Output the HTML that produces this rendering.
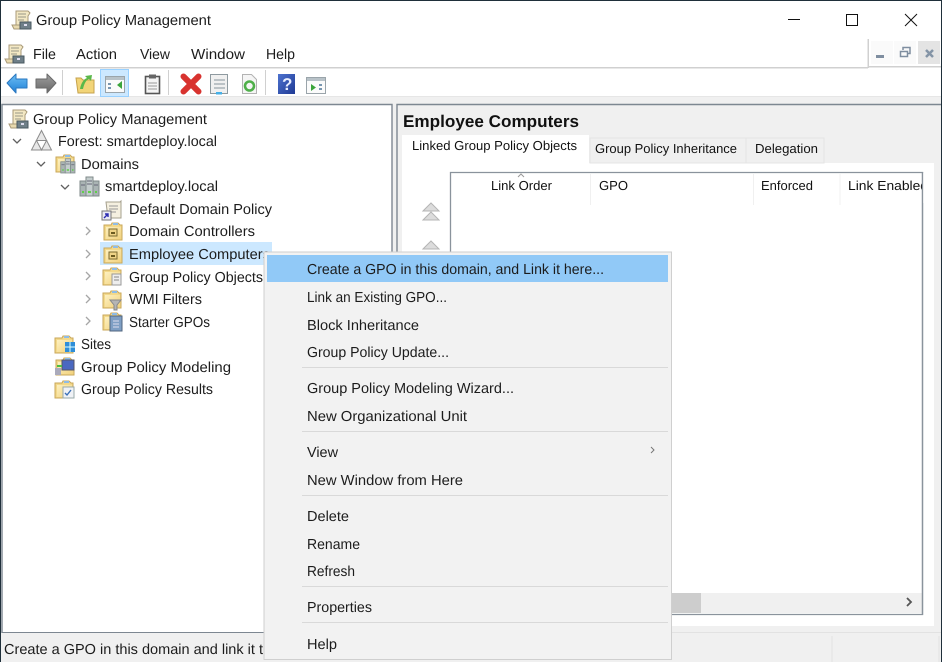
<!DOCTYPE html>
<html><head><meta charset="utf-8"><title>Group Policy Management</title>
<style>
html,body{margin:0;padding:0;background:#fff;width:942px;height:662px;overflow:hidden}
svg{display:block}
text{font-family:"Liberation Sans",sans-serif;font-size:14.5px;fill:#1c1c1c;text-rendering:geometricPrecision}
.r{font-size:13px;fill:#111}
</style></head><body>
<svg width="942" height="662" viewBox="0 0 942 662" xmlns="http://www.w3.org/2000/svg">
<defs>
<linearGradient id="fg" x1="0" y1="0" x2="1" y2="1"><stop offset="0" stop-color="#fdf0c0"/><stop offset="1" stop-color="#f2d27e"/></linearGradient>
<linearGradient id="bl" x1="0" y1="0" x2="0" y2="1"><stop offset="0" stop-color="#6fc0f5"/><stop offset="1" stop-color="#1f7fd6"/></linearGradient>
<linearGradient id="gy" x1="0" y1="0" x2="0" y2="1"><stop offset="0" stop-color="#a0a0a0"/><stop offset="1" stop-color="#666"/></linearGradient>
<linearGradient id="hb" x1="0" y1="0" x2="1" y2="1"><stop offset="0" stop-color="#4d72cf"/><stop offset="1" stop-color="#1f3a94"/></linearGradient>
<g id="scroll">
  <path d="M5 1h12l2 2-2 3v9H5z" fill="#f3e8c4" stroke="#a99a78"/>
  <path d="M7 4h8M7 7h8M7 10h6" stroke="#998" stroke-width="1"/>
  <path d="M1 15h11v4H3z" fill="#e8d9ae" stroke="#a99a78"/>
  <rect x="9" y="12" width="11" height="7" fill="#6f7f88" stroke="#4a5860"/>
  <rect x="13" y="14" width="3" height="2" fill="#dde"/>
</g>
<g id="folder">
  <path d="M1 3h7l1-2h6l2 2h2v15H1z" fill="#f3d98b" stroke="#c9a75a"/>
  <path d="M3 5h15v12H3z" fill="url(#fg)"/>
  <rect x="10" y="1" width="5" height="2" fill="#8fbce6"/>
</g>
<g id="ou">
  <use href="#folder"/>
  <rect x="6" y="7" width="8" height="7" fill="#efd386" stroke="#7a6a30"/>
  <rect x="8" y="10" width="4" height="2" fill="#6b5a20"/>
</g>
<g id="servers">
  <rect x="1" y="5" width="6" height="15" fill="#aab4b4" stroke="#7f8a8a"/>
  <rect x="7" y="1" width="7" height="19" fill="#c4cdcd" stroke="#7f8a8a"/>
  <rect x="14" y="5" width="6" height="15" fill="#aab4b4" stroke="#7f8a8a"/>
  <path d="M2 9h4M8 5h5M8 8h5M15 9h4" stroke="#667"/>
  <path d="M3 16h2M9 16h3M16 16h2" stroke="#5fd04a" stroke-width="2"/>
</g>
<g id="chev"><path d="M0 0l4 4 4-4" fill="none" stroke="#606060" stroke-width="1.300"/></g>
<g id="cr"><path d="M0 0l4 4-4 4" fill="none" stroke="#a6a6a6" stroke-width="1.300"/></g>
<g id="tri"><path d="M0 8L8 0l8 8z" fill="#dcdcdc" stroke="#b5b5b5"/></g>
</defs>

<!-- window -->
<rect width="942" height="662" fill="#fff"/>
<rect x="0" y="97" width="942" height="565" fill="#f0f0f0"/>
<rect x="0" y="67" width="868" height="1.500" fill="#d0d0d0"/>
<rect x="869" y="66" width="73" height="1.500" fill="#d0d0d0"/>
<rect x="867.500" y="39" width="1.500" height="29" fill="#d0d0d0"/>
<rect x="0" y="96" width="942" height="1" fill="#e6e6e6"/>

<!-- title -->
<use href="#scroll" x="11" y="10"/>
<text x="36" y="25" textLength="175" lengthAdjust="spacingAndGlyphs">Group Policy Management</text>
<path d="M788 19.500h12" stroke="#111" stroke-width="1"/>
<rect x="846.500" y="14.500" width="11" height="11" fill="none" stroke="#111"/>
<path d="M905 14l12 12M917 14l-12 12" stroke="#111" stroke-width="1"/>

<!-- menu -->
<use href="#scroll" x="4" y="44"/>
<text x="33" y="59" textLength="23" lengthAdjust="spacingAndGlyphs">File</text>
<text x="76" y="59" textLength="41" lengthAdjust="spacingAndGlyphs">Action</text>
<text x="140" y="59" textLength="30" lengthAdjust="spacingAndGlyphs">View</text>
<text x="191" y="59" textLength="54" lengthAdjust="spacingAndGlyphs">Window</text>
<text x="266" y="59" textLength="29" lengthAdjust="spacingAndGlyphs">Help</text>
<rect x="871" y="41" width="22" height="23" fill="#fafafa"/>
<rect x="894" y="41" width="22" height="23" fill="#fafafa"/>
<rect x="918" y="41" width="22" height="23" fill="#e4e4e4"/>
<rect x="876" y="55" width="8" height="3" fill="#7f8ea0"/>
<path d="M900.500 51.500h7v5h-7z" fill="none" stroke="#7f8ea0" stroke-width="1.500"/>
<path d="M903 50v-2.500h7v6h-2" fill="none" stroke="#7f8ea0" stroke-width="1.500"/>
<path d="M926 50l7 7M933 50l-7 7" stroke="#8494a6" stroke-width="2.500"/>

<!-- toolbar -->
<path d="M7 83l9-9v5h11v9H16v5z" fill="url(#bl)" stroke="#2a78c0" stroke-linejoin="round"/>
<path d="M56 83l-9-9v5H36v9h11v5z" fill="url(#gy)" stroke="#6a6a6a" stroke-linejoin="round"/>
<rect x="62" y="70" width="1" height="25" fill="#d0d0d0"/>
<path d="M76 78h5l2 2h11v13H78z" fill="#f2d477" stroke="#c6a24c"/>
<path d="M80 89c1-6 4-10 7-11l-2-2 7-1-1 6-2-2c-3 1-5 5-6 10z" fill="#5bb84a"/>
<rect x="100.500" y="69.500" width="28" height="27" fill="#cce8ff" stroke="#99d1ff"/>
<rect x="105.500" y="76.500" width="19" height="16" fill="#fbfbfb" stroke="#9aa4aa"/>
<rect x="106" y="77" width="18" height="3" fill="#b8c2c8"/>
<path d="M108 83h3v2h-3zM108 87h3v2h-3z" fill="#7896b0"/>
<path d="M122 81v8l-5-4z" fill="#3ba53b"/>
<rect x="145.500" y="76.500" width="14" height="17" fill="#f4f4f4" stroke="#555" stroke-width="1.600"/>
<rect x="149" y="74.500" width="7" height="4" fill="#666"/>
<path d="M148 83h9M148 86h9M148 89h9" stroke="#999"/>
<rect x="168" y="70" width="1" height="25" fill="#d0d0d0"/>
<path d="M183.500 76.500l15 15M198.500 76.500l-15 15" stroke="#d8332f" stroke-width="6" stroke-linecap="round"/>
<rect x="210.500" y="74.500" width="17" height="19" fill="#f0f0f0" stroke="#8e9aa0"/>
<path d="M214 80h11M214 84h11M214 88h11" stroke="#a9b3b8" stroke-width="1.500"/>
<rect x="216" y="92" width="6" height="2.500" fill="#45b0e8"/>
<path d="M242.500 74.500h9l5 5v14h-14z" fill="#f5f5f5" stroke="#b3b3b3"/>
<circle cx="249.500" cy="86" r="4.500" fill="none" stroke="#4fb04a" stroke-width="2.600"/>
<rect x="265" y="70" width="1" height="25" fill="#d0d0d0"/>
<rect x="278" y="74" width="17" height="20" fill="url(#hb)"/>
<text x="282" y="90" style="font-size:17px;font-weight:bold;fill:#e8eeff">?</text>
<rect x="306.500" y="77.500" width="19" height="16" fill="#fbfbfb" stroke="#9aa4aa"/>
<rect x="307" y="78" width="18" height="3" fill="#b8c2c8"/>
<path d="M311 84v7l5-3.500z" fill="#3ba53b"/>
<path d="M319 84h3v2h-3zM319 88h3v2h-3z" fill="#7896b0"/>

<!-- tree pane -->
<rect x="2" y="104" width="390" height="529" fill="#fff"/>
<path d="M2 633V104.500h390V633" fill="none" stroke="#7d8791" stroke-width="1.400"/>
<rect x="2" y="632" width="390" height="1.500" fill="#7d8791"/>
<rect x="100" y="242" width="172" height="23" fill="#cce8ff"/>

<use href="#scroll" x="8" y="109"/>
<text x="33" y="124" textLength="174" lengthAdjust="spacingAndGlyphs">Group Policy Management</text>
<use href="#chev" x="13" y="139"/>
<path d="M41.500 130.500L31.500 150h20z" fill="#e8e8e8" stroke="#8c8c8c"/><path d="M36.500 140.500h10L41.500 150z" fill="#fff" stroke="#8c8c8c"/>
<text x="58" y="146" textLength="159" lengthAdjust="spacingAndGlyphs">Forest: smartdeploy.local</text>
<use href="#chev" x="37" y="162"/>
<use href="#folder" x="55" y="154"/><use href="#servers" transform="translate(60 158) scale(.75)"/>
<text x="81" y="169" textLength="58" lengthAdjust="spacingAndGlyphs">Domains</text>
<use href="#chev" x="61" y="185"/>
<use href="#servers" x="79" y="176"/>
<text x="105" y="191" textLength="113" lengthAdjust="spacingAndGlyphs">smartdeploy.local</text>
<path d="M106 202h14l1-1v17h-13z" fill="#f5f0e0" stroke="#a5a08e"/><path d="M109 206h9M109 209h9M109 212h7" stroke="#999"/><rect x="102" y="211" width="9" height="9" fill="#e9e9f4" stroke="#777"/><path d="M104 218l4-4M105 214h3v3" stroke="#2a2ab0" stroke-width="1.400" fill="none"/>
<text x="129" y="214" textLength="143" lengthAdjust="spacingAndGlyphs">Default Domain Policy</text>
<use href="#cr" x="86" y="227"/>
<use href="#ou" x="103" y="222"/>
<text x="129" y="236" textLength="126" lengthAdjust="spacingAndGlyphs">Domain Controllers</text>
<use href="#cr" x="86" y="250"/>
<use href="#ou" x="103" y="245"/>
<text x="129" y="259" textLength="141" lengthAdjust="spacingAndGlyphs">Employee Computers</text>
<use href="#cr" x="86" y="272"/>
<use href="#folder" x="102" y="267"/><rect x="112" y="274" width="9" height="11" fill="#eee" stroke="#999"/><path d="M114 277h5M114 280h5" stroke="#888"/>
<text x="129" y="282" textLength="134" lengthAdjust="spacingAndGlyphs">Group Policy Objects</text>
<use href="#cr" x="86" y="295"/>
<use href="#folder" x="102" y="290"/><path d="M110 300h11l-4 5v5l-3 0v-5z" fill="#b5b5b5" stroke="#888"/>
<text x="129" y="304" textLength="73" lengthAdjust="spacingAndGlyphs">WMI Filters</text>
<use href="#cr" x="86" y="317"/>
<use href="#folder" x="102" y="312"/><rect x="110" y="316" width="12" height="15" fill="#7f9fc4" stroke="#50667f"/><path d="M113 321h6M113 324h6M113 327h6" stroke="#dde"/>
<text x="129" y="327" textLength="81" lengthAdjust="spacingAndGlyphs">Starter GPOs</text>
<use href="#folder" x="54" y="335"/><rect x="65" y="342" width="10" height="10" fill="#2f8ed8"/><path d="M65 347h10M70 342v10" stroke="#dff"/>
<text x="81" y="349" textLength="30" lengthAdjust="spacingAndGlyphs">Sites</text>
<use href="#folder" x="55" y="357"/><rect x="62" y="360" width="12" height="10" fill="#4a68c0" stroke="#556"/><rect x="55" y="368" width="6" height="7" fill="#aab"/><path d="M57 366h5" stroke="#4bbd3f" stroke-width="2"/>
<text x="81" y="372" textLength="150" lengthAdjust="spacingAndGlyphs">Group Policy Modeling</text>
<use href="#folder" x="54" y="380"/><rect x="63" y="387" width="11" height="11" fill="#f0f2f6" stroke="#9aa"/><path d="M65 393l2 2 4-5" stroke="#3a70b8" fill="none" stroke-width="1.400"/>
<text x="81" y="394" textLength="132" lengthAdjust="spacingAndGlyphs">Group Policy Results</text>

<!-- right pane -->
<rect x="397" y="104" width="544" height="528" fill="#f0f0f0"/>
<path d="M397 632V104.500h545" fill="none" stroke="#7d8791" stroke-width="1.400"/>
<text x="403" y="127" textLength="176" lengthAdjust="spacingAndGlyphs" style="font-size:17px;font-weight:bold;fill:#111">Employee Computers</text>
<rect x="402" y="163" width="532" height="463" fill="#fff"/>
<rect x="402" y="135" width="187" height="29" fill="#fff"/>
<rect x="590" y="138" width="156" height="25" fill="#f0f0f0" stroke="#e4e4e4"/>
<rect x="746" y="138" width="78" height="25" fill="#f0f0f0" stroke="#e4e4e4"/>
<text class="r" x="412" y="150" textLength="165" lengthAdjust="spacingAndGlyphs">Linked Group Policy Objects</text>
<text class="r" x="595" y="153" textLength="142" lengthAdjust="spacingAndGlyphs">Group Policy Inheritance</text>
<text class="r" x="755" y="153" textLength="63" lengthAdjust="spacingAndGlyphs">Delegation</text>

<use href="#tri" x="423" y="203"/><path d="M423 220l8-8 8 8z" fill="#dcdcdc" stroke="#b5b5b5"/>
<use href="#tri" x="423" y="241"/>

<rect x="450" y="172" width="473" height="443" fill="#fff"/>
<rect x="450" y="593" width="472" height="20" fill="#f0f0f0"/>
<rect x="640" y="593" width="61" height="20" fill="#cdcdcd"/>
<path d="M907 598l4 4-4 4" fill="none" stroke="#555" stroke-width="1.800"/>
<path d="M450.500 615V172.500h472V614.500H450" fill="none" stroke="#8a939c" stroke-width="1.300"/>
<path d="M590.500 174v31M753.500 174v31M840 174v31" stroke="#f0f0f0"/>
<path d="M518 177l3-3 3 3" fill="none" stroke="#999"/>
<text class="r" x="491" y="190" textLength="61" lengthAdjust="spacingAndGlyphs">Link Order</text>
<text class="r" x="599" y="190" textLength="29" lengthAdjust="spacingAndGlyphs">GPO</text>
<text class="r" x="761" y="190" textLength="52" lengthAdjust="spacingAndGlyphs">Enforced</text>
<text class="r" x="848" y="190" textLength="80" lengthAdjust="spacingAndGlyphs">Link Enabled</text>
<rect x="922" y="173" width="12" height="30" fill="#fff"/>
<path d="M922.500 172v443" stroke="#8a939c" stroke-width="1.300"/>

<!-- status -->
<rect x="0" y="633" width="942" height="29" fill="#f0f0f0"/>
<rect x="392" y="632" width="550" height="1" fill="#e2e2e2"/>
<rect x="831.500" y="636" width="1" height="26" fill="#e2e2e2"/>
<rect x="938.500" y="636" width="1" height="26" fill="#e2e2e2"/>
<text x="4" y="654" textLength="259" lengthAdjust="spacingAndGlyphs">Create a GPO in this domain and link it t</text>

<!-- context menu -->
<rect x="264" y="252" width="407.500" height="407.500" fill="#f2f2f2" stroke="#cfcfcf"/>
<rect x="267" y="255" width="401" height="27" fill="#91c9f7"/>
<text x="307" y="274" textLength="297" lengthAdjust="spacingAndGlyphs">Create a GPO in this domain, and Link it here...</text>
<text x="307" y="302" textLength="140" lengthAdjust="spacingAndGlyphs">Link an Existing GPO...</text>
<text x="307" y="330" textLength="112" lengthAdjust="spacingAndGlyphs">Block Inheritance</text>
<text x="307" y="357" textLength="142" lengthAdjust="spacingAndGlyphs">Group Policy Update...</text>
<rect x="302" y="367" width="366" height="1" fill="#d9d9d9"/>
<text x="307" y="393" textLength="207" lengthAdjust="spacingAndGlyphs">Group Policy Modeling Wizard...</text>
<text x="307" y="421" textLength="160" lengthAdjust="spacingAndGlyphs">New Organizational Unit</text>
<rect x="302" y="431" width="366" height="1" fill="#d9d9d9"/>
<text x="307" y="457" textLength="31" lengthAdjust="spacingAndGlyphs">View</text>
<path d="M651 447l3 3-3 3" fill="none" stroke="#777"/>
<text x="307" y="485" textLength="156" lengthAdjust="spacingAndGlyphs">New Window from Here</text>
<rect x="302" y="495" width="366" height="1" fill="#d9d9d9"/>
<text x="307" y="521" textLength="42" lengthAdjust="spacingAndGlyphs">Delete</text>
<text x="307" y="549" textLength="53" lengthAdjust="spacingAndGlyphs">Rename</text>
<text x="307" y="576" textLength="48" lengthAdjust="spacingAndGlyphs">Refresh</text>
<rect x="302" y="586" width="366" height="1" fill="#d9d9d9"/>
<text x="307" y="612" textLength="65" lengthAdjust="spacingAndGlyphs">Properties</text>
<rect x="302" y="622" width="366" height="1" fill="#d9d9d9"/>
<text x="307" y="649" textLength="30" lengthAdjust="spacingAndGlyphs">Help</text>

<!-- window frame -->
<rect x="0" y="0" width="942" height="1" fill="#1f2f3a"/>
<rect x="0" y="0" width="1" height="662" fill="#1f2f3a"/>
<rect x="941" y="0" width="1" height="662" fill="#1f2f3a"/>
</svg>
</body></html>
